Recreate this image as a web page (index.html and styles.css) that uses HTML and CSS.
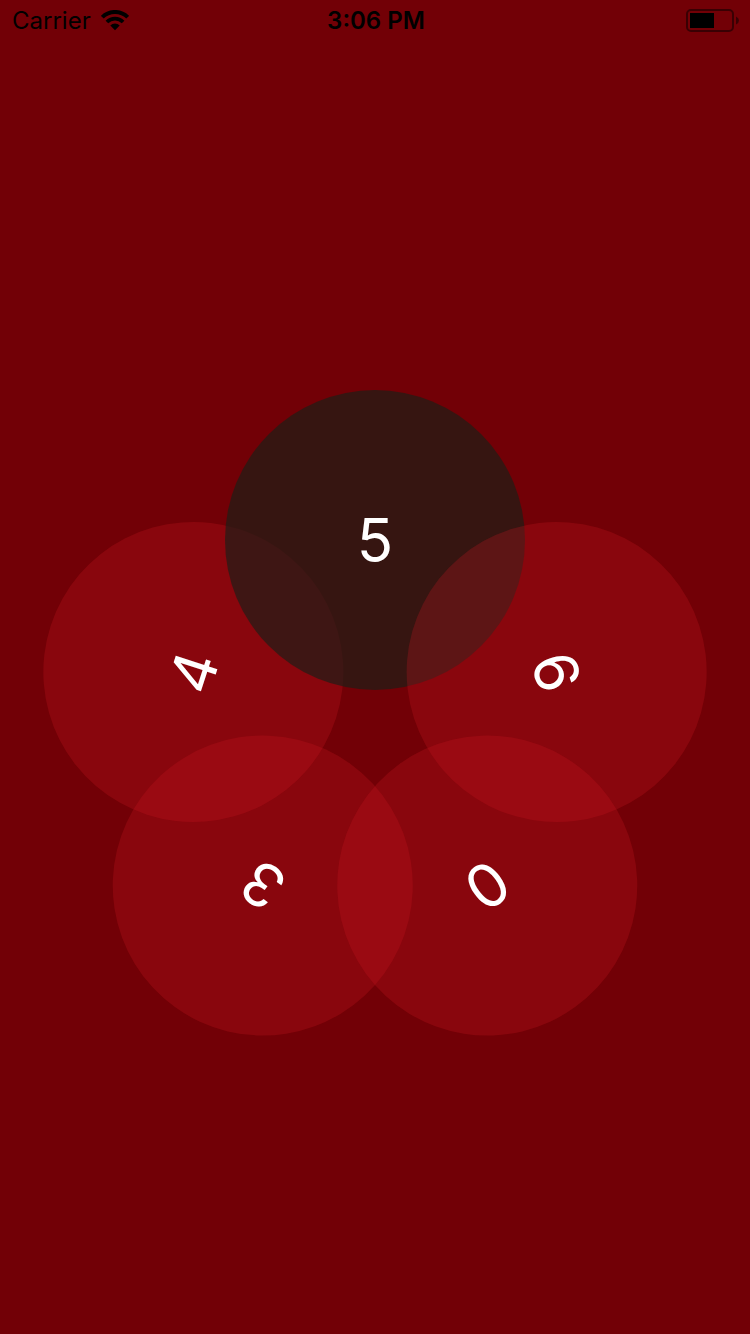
FILE: index.html
```html
<!DOCTYPE html>
<html lang="en">
<head>
<meta charset="utf-8">
<meta name="viewport" content="width=device-width, initial-scale=1">
<title>Dial</title>
<link rel="stylesheet" href="styles.css">
</head>
<body>
<header class="status">
  <div class="network">
    <span class="label">Carrier</span>
    <svg class="wifi" viewBox="0 0 28 21" width="28" height="21" aria-hidden="true">
      <path d="M1.300 7.200A18 18 0 0 1 26.700 7.200" fill="none" stroke="#000" stroke-width="4"/>
      <path d="M5.900 12A11.400 11.400 0 0 1 22.100 12" fill="none" stroke="#000" stroke-width="3.800"/>
      <path d="M9.300 15.400A6.800 6.800 0 0 1 18.700 15.400L14 20.200Z"/>
    </svg>
  </div>
  <time class="label time">3:06 PM</time>
  <svg class="battery" viewBox="0 0 54 23" width="54" height="23" aria-hidden="true">
    <rect x="1" y="1" width="46" height="21" rx="4" fill="none" stroke="#000" stroke-opacity=".5" stroke-width="2"/>
    <rect x="4" y="4" width="24" height="15"/>
    <path d="M50 7.500Q53 9 53 11.500T50 15.500Z" fill-opacity=".5"/>
  </svg>
</header>
<main class="stage">
  <div class="dial">
    <button class="petal at-3" type="button">3</button>
    <button class="petal at-4" type="button">4</button>
    <button class="petal selected" type="button">5</button>
    <button class="petal at-6" type="button">6</button>
    <button class="petal at-0" type="button">0</button>
  </div>
</main>
</body>
</html>
```
FILE: styles.css
```css
* {
  box-sizing: border-box;
}

body {
  margin: 0;
  min-height: 100vh;
  display: flex;
  flex-direction: column;
  background: #720006;
  color: #000;
  font-family: Inter, "Liberation Sans", sans-serif;
  overflow-x: hidden;
}

.status {
  display: grid;
  grid-template-columns: 1fr auto 1fr;
  align-items: center;
  height: 40px;
  padding: 0 10px 0 12px;
  font-size: 24px;
  line-height: 38px;
}

.network {
  display: flex;
  align-items: center;
  gap: 10px;
}

.label {
  padding-top: 2px;
}

.time {
  font-weight: 600;
}

.battery {
  justify-self: end;
}

.stage {
  flex: 1;
  display: grid;
  place-items: center;
  padding-top: 88px;
}

.dial {
  display: grid;
  place-items: center;
  min-height: 682px;
}

.petal {
  --angle: 0deg;
  grid-area: 1 / 1;
  width: 300px;
  height: 300px;
  padding: 0;
  border: 0;
  border-radius: 50%;
  background: rgba(206, 22, 36, 0.26);
  color: #fff;
  font: inherit;
  font-size: 60px;
  transform: rotate(var(--angle)) translateY(-191px);
}

.selected {
  background: rgba(25, 31, 24, 0.67);
}

.at-6 {
  --angle: 72deg;
}

.at-0 {
  --angle: 144deg;
}

.at-3 {
  --angle: 216deg;
}

.at-4 {
  --angle: 288deg;
}
```
